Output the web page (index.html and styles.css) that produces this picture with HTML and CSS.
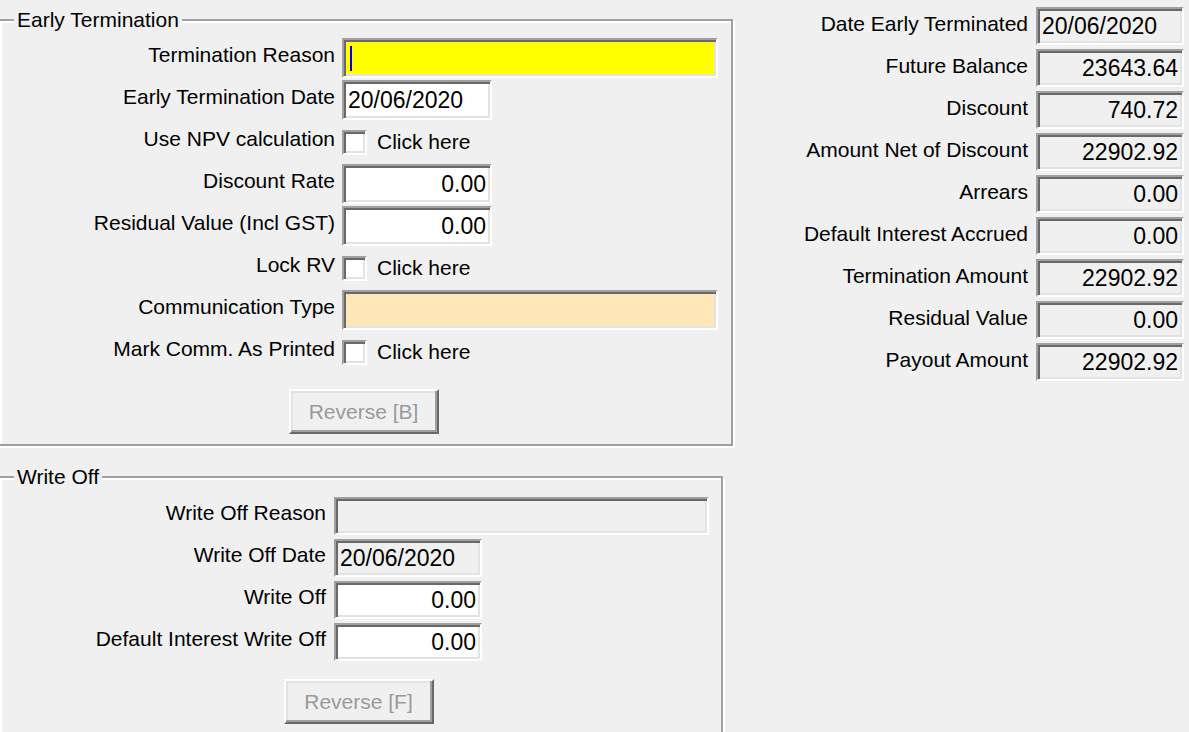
FILE: index.html
```html
<!DOCTYPE html>
<html lang="en">
<head>
  <meta charset="UTF-8">
  <title>Early Termination</title>
  <link rel="stylesheet" href="styles.css">
</head>
<body>
  <div class="screen">
    <div class="left">
      <fieldset class="group group-et">
        <legend>Early Termination</legend>
        <div class="row">
          <label>Termination Reason</label>
          <div class="field wide yellow"><span class="caret"></span></div>
        </div>
        <div class="row">
          <label>Early Termination Date</label>
          <div class="field short">20/06/2020</div>
        </div>
        <div class="row">
          <label>Use NPV calculation</label>
          <span class="check"></span><span class="check-text">Click here</span>
        </div>
        <div class="row">
          <label>Discount Rate</label>
          <div class="field short num">0.00</div>
        </div>
        <div class="row">
          <label>Residual Value (Incl GST)</label>
          <div class="field short num">0.00</div>
        </div>
        <div class="row">
          <label>Lock RV</label>
          <span class="check"></span><span class="check-text">Click here</span>
        </div>
        <div class="row">
          <label>Communication Type</label>
          <div class="field wide peach"></div>
        </div>
        <div class="row">
          <label>Mark Comm. As Printed</label>
          <span class="check"></span><span class="check-text">Click here</span>
        </div>
        <div class="actions">
          <button type="button" disabled>Reverse [B]</button>
        </div>
      </fieldset>

      <fieldset class="group group-wo">
        <legend>Write Off</legend>
        <div class="row">
          <label>Write Off Reason</label>
          <div class="field wide readonly"></div>
        </div>
        <div class="row">
          <label>Write Off Date</label>
          <div class="field short readonly">20/06/2020</div>
        </div>
        <div class="row">
          <label>Write Off</label>
          <div class="field short num">0.00</div>
        </div>
        <div class="row">
          <label>Default Interest Write Off</label>
          <div class="field short num">0.00</div>
        </div>
        <div class="actions">
          <button type="button" disabled>Reverse [F]</button>
        </div>
      </fieldset>
    </div>

    <div class="summary">
      <label>Date Early Terminated</label>
      <div class="field readonly">20/06/2020</div>
      <label>Future Balance</label>
      <div class="field readonly num">23643.64</div>
      <label>Discount</label>
      <div class="field readonly num">740.72</div>
      <label>Amount Net of Discount</label>
      <div class="field readonly num">22902.92</div>
      <label>Arrears</label>
      <div class="field readonly num">0.00</div>
      <label>Default Interest Accrued</label>
      <div class="field readonly num">0.00</div>
      <label>Termination Amount</label>
      <div class="field readonly num">22902.92</div>
      <label>Residual Value</label>
      <div class="field readonly num">0.00</div>
      <label>Payout Amount</label>
      <div class="field readonly num">22902.92</div>
    </div>
  </div>
</body>
</html>
```

FILE: styles.css
```css
html, body {
  margin: 0;
  padding: 0;
  height: 100%;
  overflow: hidden;
}
body {
  font-family: "Liberation Sans", Arial, sans-serif;
  font-size: 21px;
  color: #000;
  background-color: #f0f0f0;
}
.screen {
  display: flex;
  align-items: flex-start;
  height: 732px;
}
.left {
  padding-top: 8px;
  margin-left: -2px;
}

/* group boxes */
.group {
  margin: 0;
  padding: 0;
  border: 2px solid #a0a0a0;
  box-shadow: inset 2px 2px 0 #fff, 2px 2px 0 #fff;
}
.group legend {
  margin-left: 14px;
  padding: 0 3px;
  line-height: 24px;
  background-color: #f0f0f0;
}
.group-et {
  width: 735px;
  box-sizing: border-box;
  padding: 5px 0 10px 0;
}
.group-wo {
  width: 725px;
  box-sizing: border-box;
  margin-top: 19px;
  padding: 6px 0 10px 0;
}

.row {
  display: flex;
  align-items: center;
  height: 42px;
}
.row label {
  text-align: right;
  padding-bottom: 6px;
  white-space: nowrap;
}
.group-et .row label {
  width: 335px;
  margin-right: 7px;
}
.group-wo .row label {
  width: 326px;
  margin-right: 8px;
}

/* sunken edit boxes */
.field {
  box-sizing: border-box;
  height: 40px;
  border: 2px solid;
  border-color: #a0a0a0 #fff #fff #a0a0a0;
  box-shadow: inset 2px 2px 0 #696969, inset -2px -2px 0 #e3e3e3;
  background-color: #fff;
  padding: 0 4px;
  font-size: 23px;
  display: flex;
  align-items: center;
  white-space: nowrap;
}
.field.num {
  justify-content: flex-end;
}
.group-et .field.wide {
  width: 376px;
}
.group-et .field.short {
  width: 150px;
}
.group-wo .field {
  height: 38px;
}
.group-wo .field.wide {
  width: 375px;
}
.group-wo .field.short {
  width: 148px;
}
.field.yellow {
  background-color: #ffff00;
}
.field.peach {
  background-color: #ffe7ba;
}
.field.readonly {
  background-color: #f0f0f0;
}
.caret {
  width: 2px;
  height: 25px;
  margin-left: 2px;
  background-color: #0000ff;
}

/* check boxes */
.check {
  box-sizing: border-box;
  width: 25px;
  height: 25px;
  border: 2px solid;
  border-color: #a0a0a0 #fff #fff #a0a0a0;
  box-shadow: inset 2px 2px 0 #696969, inset -2px -2px 0 #e3e3e3;
  background-color: #fff;
}
.check-text {
  margin-left: 10px;
}

/* buttons */
.actions {
  display: flex;
  justify-content: center;
  margin-top: 16px;
  padding-right: 4px;
}
button {
  box-sizing: border-box;
  width: 150px;
  height: 45px;
  font-family: inherit;
  font-size: 21px;
  border: 2px solid;
  border-color: #fff #696969 #696969 #fff;
  box-shadow: inset -2px -2px 0 #a0a0a0, inset 2px 2px 0 #e3e3e3;
  background-color: #f0f0f0;
  padding: 0;
}
button:disabled {
  color: #9a9a9a;
}

/* totals on the right */
.summary {
  margin-left: auto;
  margin-right: 5px;
  padding-top: 5px;
  display: grid;
  grid-template-columns: auto 148px;
  grid-auto-rows: 42px;
  column-gap: 8px;
  align-items: center;
}
.summary label {
  text-align: right;
  padding-bottom: 5px;
  white-space: nowrap;
}
.summary .field {
  height: 38px;
}
```
